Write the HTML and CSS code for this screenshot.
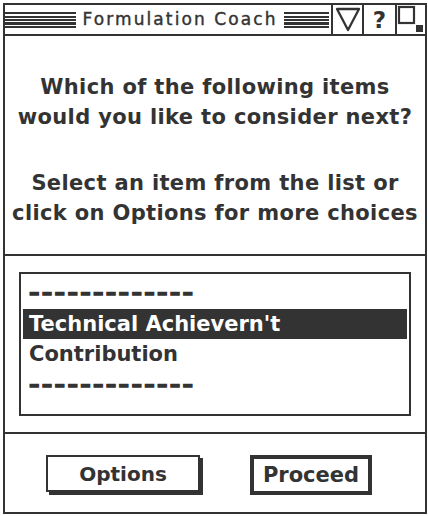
FILE: index.html
```html
<!DOCTYPE html>
<html>
<head>
<meta charset="utf-8">
<link rel="stylesheet" href="styles.css">
</head>
<body>
<div class="window">
  <div class="titlebar">
    <div class="stripes stripes-left"></div>
    <div class="title">Formulation Coach</div>
    <div class="stripes stripes-right"></div>
    <div class="tbox tbox-tri">
      <svg width="26" height="25" viewBox="0 0 26 25"><path d="M2 2 H24 L13 23 Z" fill="none" stroke="#333" stroke-width="2.3" stroke-linejoin="round"/></svg>
    </div>
    <div class="tbox tbox-help">?</div>
    <div class="tbox tbox-zoom">
      <svg width="28" height="29" viewBox="0 0 28 29"><rect x="2" y="2" width="15" height="16" fill="none" stroke="#333" stroke-width="2.2"/><rect x="19" y="20" width="7" height="7" fill="#333"/></svg>
    </div>
  </div>
  <div class="prompt">
    <p class="para">Which of the following items<br>would you like to consider next?</p>
    <p class="para">Select an item from the list or<br>click on Options for more choices</p>
  </div>
  <div class="listarea">
    <div class="listbox">
      <div class="row dashes">–––––––––––––</div>
      <div class="row selected">Technical Achievern't</div>
      <div class="row">Contribution</div>
      <div class="row dashes">–––––––––––––</div>
    </div>
  </div>
  <div class="buttons">
    <div class="btn btn-options">Options</div>
    <div class="btn btn-proceed">Proceed</div>
  </div>
</div>
</body>
</html>
```
FILE: styles.css
```css
* { box-sizing: border-box; }
body {
  margin: 0;
  background: #fff;
  font-family: "DejaVu Sans", "Liberation Sans", sans-serif;
  color: #333;
}
.window {
  margin: 3px 0 0 3px;
  width: 424px;
  height: 511px;
  border: 2px solid #333;
  display: flex;
  flex-direction: column;
}
.titlebar {
  height: 31px;
  border-bottom: 2px solid #333;
  display: flex;
  align-items: stretch;
}
.stripes {
  align-self: center;
  height: 16px;
  background: repeating-linear-gradient(to bottom, #333 0, #333 2px, transparent 2px, transparent 3.5px);
}
.stripes-left { width: 71px; }
.stripes-right { width: 45px; }
.title {
  width: 209px;
  text-align: center;
  font-size: 17px;
  letter-spacing: 2.1px;
  line-height: 29px;
  -webkit-text-stroke: 0.4px #333;
}
.tbox {
  border-left: 2px solid #333;
  display: flex;
  align-items: center;
  justify-content: center;
}
.tbox-tri { width: 31px; margin-left: 2px; }
.tbox-help { width: 33px; font-weight: bold; font-size: 23px; }
.tbox-zoom { flex: 1; align-items: stretch; justify-content: flex-start; }
.prompt {
  height: 220px;
  border-bottom: 2px solid #333;
  padding-top: 36px;
  text-align: center;
  font-weight: bold;
  font-size: 21px;
  letter-spacing: 0.35px;
  line-height: 30px;
}
.para { margin: 0 0 36px 0; }
.listarea {
  height: 178px;
  border-bottom: 2px solid #333;
  padding: 16px 14px 0 14px;
}
.listbox {
  height: 144px;
  border: 2px solid #333;
  padding: 4px 2px 0 2px;
  font-weight: bold;
  font-size: 21px;
}
.row {
  height: 31px;
  line-height: 31px;
  padding-left: 6px;
}
.row.selected {
  background: #333;
  color: #fff;
  height: 30px;
  line-height: 30px;
}
.dashes {
  letter-spacing: 2.3px;
  -webkit-text-stroke: 1.3px #333;
}
.buttons {
  flex: 1;
  display: flex;
  padding: 21px 0 0 41px;
  gap: 50px;
}
.btn {
  height: 37px;
  font-weight: bold;
  font-size: 20px;
  display: flex;
  align-items: center;
  justify-content: center;
}
.btn-options {
  width: 154px;
  border: 2px solid #333;
  box-shadow: 3px 3px 0 #333;
}
.btn-proceed {
  width: 122px;
  height: 40px;
  border: 4px solid #333;
  font-size: 21px;
}
```
